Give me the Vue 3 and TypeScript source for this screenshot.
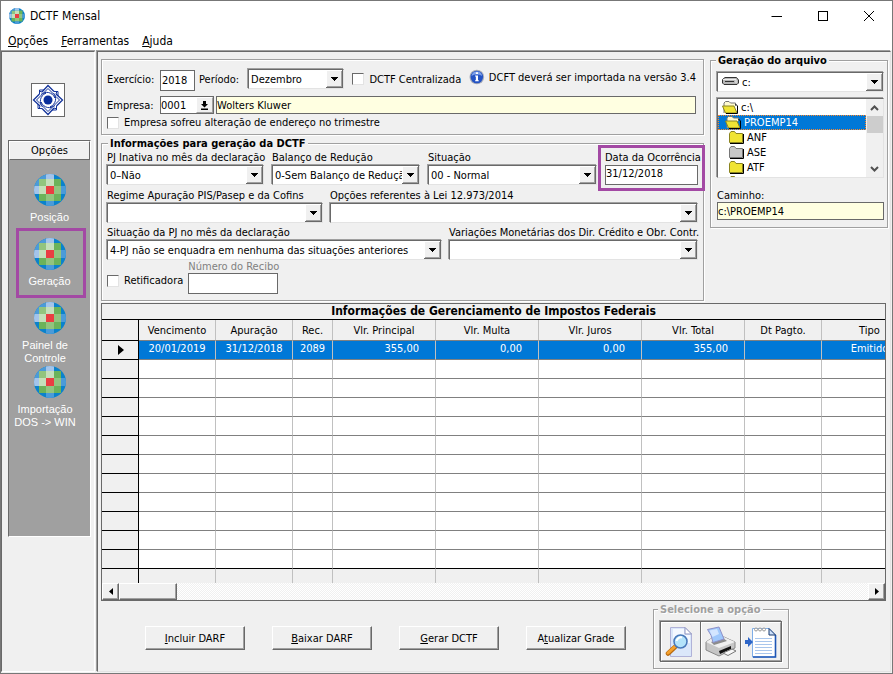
<script setup lang="ts">
import { ref } from 'vue'

interface TaxRow {
  due: string
  period: string
  code: string
  principal: string
  fine: string
  interest: string
  total: string
  paid: string
  kind: string
}

const exercise = ref('2018')
const company = ref('0001')
const companyName = ref('Wolters Kluwer')
const eventDate = ref('31/12/2018')
const receipt = ref('')
const path = ref('c:\\PROEMP14')

const tools = [
  { id: 'posicao', lines: ['Posição'], active: false },
  { id: 'geracao', lines: ['Geração'], active: true },
  { id: 'painel', lines: ['Painel de', 'Controle'], active: false },
  { id: 'importacao', lines: ['Importação', 'DOS -> WIN'], active: false },
]

const folders = [
  { name: 'c:\\', depth: 0, open: true, selected: false, grey: false },
  { name: 'PROEMP14', depth: 1, open: true, selected: true, grey: false },
  { name: 'ANF', depth: 2, open: false, selected: false, grey: false },
  { name: 'ASE', depth: 2, open: false, selected: false, grey: true },
  { name: 'ATF', depth: 2, open: false, selected: false, grey: false },
  { name: '', depth: 2, open: false, selected: false, grey: false },
]

const headers = ['Vencimento', 'Apuração', 'Rec.', 'Vlr. Principal', 'Vlr. Multa', 'Vlr. Juros', 'Vlr. Total', 'Dt Pagto.', 'Tipo']

const row: TaxRow = {
  due: '20/01/2019',
  period: '31/12/2018',
  code: '2089',
  principal: '355,00',
  fine: '0,00',
  interest: '0,00',
  total: '355,00',
  paid: '',
  kind: 'Emitido',
}

const actions = [
  { before: '', key: 'I', after: 'ncluir DARF' },
  { before: '', key: 'B', after: 'aixar DARF' },
  { before: '', key: 'G', after: 'erar DCTF' },
  { before: 'A', key: 't', after: 'ualizar Grade' },
]
</script>

<template>
  <svg class="defs" aria-hidden="true">
    <defs>
      <clipPath id="disc"><circle cx="16" cy="16" r="16" /></clipPath>
      <symbol id="globe" viewBox="0 0 32 32">
        <g clip-path="url(#disc)">
          <rect width="32" height="32" fill="#0a82cc" />
          <rect x="12" width="8" height="5" fill="#a4c4ea" />
          <rect x="5" y="5" width="7" height="7" fill="#92c47e" />
          <rect x="12" y="5" width="8" height="7" fill="#c5dfbb" />
          <rect x="20" y="5" width="7" height="7" fill="#6bb35a" />
          <rect y="12" width="5" height="8" fill="#a4c4ea" />
          <rect x="5" y="12" width="7" height="8" fill="#c5dfbb" />
          <rect x="12" y="12" width="8" height="8" fill="#e93e42" />
          <rect x="20" y="12" width="7" height="8" fill="#92c47e" />
          <rect x="27" y="12" width="5" height="8" fill="#4c9bd8" />
          <rect x="5" y="20" width="7" height="7" fill="#6bb35a" />
          <rect x="12" y="20" width="8" height="7" fill="#92c47e" />
          <rect x="20" y="20" width="7" height="7" fill="#6bb35a" />
          <rect x="12" y="27" width="8" height="5" fill="#4c9bd8" />
          <rect x="5" width="7" height="5" fill="#4c9bd8" />
          <rect y="5" width="5" height="7" fill="#4c9bd8" />
        </g>
      </symbol>
    </defs>
  </svg>

  <div class="window">
    <header class="titlebar">
      <svg class="app-icon" aria-hidden="true"><use href="#globe" /></svg>
      <h1>DCTF Mensal</h1>
      <div class="window-buttons">
        <button type="button" aria-label="Minimizar"><svg viewBox="0 0 12 12"><path d="M0.5 6.5H11" /></svg></button>
        <button type="button" aria-label="Maximizar"><svg viewBox="0 0 12 12"><rect x="1.5" y="1.5" width="9" height="9" /></svg></button>
        <button type="button" aria-label="Fechar"><svg viewBox="0 0 12 12"><path d="M1 1L11 11M11 1L1 11" /></svg></button>
      </div>
    </header>

    <nav class="menubar">
      <a href="#opcoes"><u>O</u>pções</a>
      <a href="#ferramentas"><u>F</u>erramentas</a>
      <a href="#ajuda"><u>A</u>juda</a>
    </nav>

    <div class="body">
      <aside class="sidebar">
        <svg class="brand" viewBox="0 0 32 32" aria-hidden="true">
          <g fill="none" stroke="#14349b">
            <g id="arm">
              <path d="M10 8L16 1.5L22 7.5" stroke-width="1.3" />
              <path d="M12.5 8L16 4.5L23 11.5V14" />
              <path d="M9 10.5C13 7 20 7.5 23 14" />
              <path d="M22 7.5H26V12M10 8L7 7" />
            </g>
            <use href="#arm" transform="rotate(90 16 16)" />
            <use href="#arm" transform="rotate(180 16 16)" />
            <use href="#arm" transform="rotate(270 16 16)" />
          </g>
          <circle cx="16" cy="16" r="4.5" fill="#0a2f9c" />
        </svg>
        <div class="toolbox">
          <h2>Opções</h2>
          <div class="tools">
            <button v-for="t in tools" :key="t.id" type="button" class="tool" :class="{ active: t.active, multi: t.lines.length > 1 }">
              <svg aria-hidden="true"><use href="#globe" /></svg>
              <span v-for="l in t.lines" :key="l">{{ l }}</span>
            </button>
          </div>
        </div>
      </aside>

      <main class="content">
        <div class="top">
          <div class="forms">
            <section class="group company">
              <div class="line exercise-line">
                <label for="exercise" class="lead">Exercício:</label>
                <input id="exercise" v-model="exercise" class="box year" type="text" />
                <label for="period" class="period-label">Período:</label>
                <select id="period" class="period"><option>Dezembro</option></select>
                <label class="check central"><input type="checkbox" />DCTF Centralizada</label>
                <svg class="info" viewBox="0 0 16 16" aria-hidden="true">
                  <circle cx="8" cy="8" r="7.5" fill="#a9adb8" />
                  <circle cx="8" cy="8" r="6.4" fill="#2453c4" />
                  <path d="M2.5 7A5.6 5.6 0 0 1 13.5 7Q8 4 2.5 7Z" fill="#7c9fe8" />
                  <path d="M7 3.2H9.2V5H7ZM6.2 6.4H9.2V11.2H10V12.4H6.2V11.2H7V7.6H6.2Z" fill="#fff" />
                </svg>
                <span class="notice">DCFT deverá ser importada na versão 3.4</span>
              </div>
              <div class="line company-line">
                <label for="company" class="lead">Empresa:</label>
                <div class="lookup">
                  <input id="company" v-model="company" type="text" />
                  <button type="button" aria-label="Buscar empresa">
                    <svg viewBox="0 0 9 9"><path d="M3 0H6V3H8L4.5 6.5L1 3H3ZM1 7.5H8V9H1Z" /></svg>
                  </button>
                </div>
                <input v-model="companyName" class="box yellow company-name" type="text" aria-label="Nome da empresa" />
              </div>
              <label class="check"><input type="checkbox" />Empresa sofreu alteração de endereço no trimestre</label>
            </section>

            <section class="group dctf">
              <h2 class="legend">Informações para geração da DCTF</h2>
              <div class="line status-line">
                <div class="field inactive">
                  <label for="inactive">PJ Inativa no mês da declaração</label>
                  <select id="inactive"><option>0–Não</option></select>
                </div>
                <div class="field balance">
                  <label for="balance">Balanço de Redução</label>
                  <select id="balance"><option>0-Sem Balanço de Redução</option></select>
                </div>
                <div class="field situation">
                  <label for="situation">Situação</label>
                  <select id="situation"><option>00 - Normal</option></select>
                </div>
                <div class="field marked">
                  <label for="event">Data da Ocorrência</label>
                  <input id="event" v-model="eventDate" class="box" type="text" />
                </div>
              </div>
              <div class="line">
                <div class="field regime">
                  <label for="regime">Regime Apuração PIS/Pasep e da Cofins</label>
                  <select id="regime"><option></option></select>
                </div>
                <div class="field grow">
                  <label for="law">Opções referentes à Lei 12.973/2014</label>
                  <select id="law"><option></option></select>
                </div>
              </div>
              <div class="line">
                <div class="field pj">
                  <label for="pj">Situação da PJ no mês da declaração</label>
                  <select id="pj"><option>4-PJ não se enquadra em nenhuma das situações anteriores</option></select>
                </div>
                <div class="field grow">
                  <label for="variation">Variações Monetárias dos Dir. Crédito e Obr. Contr.</label>
                  <select id="variation"><option></option></select>
                </div>
              </div>
              <div class="line receipt-line">
                <label class="check"><input type="checkbox" />Retificadora</label>
                <div class="field receipt">
                  <label for="receipt">Número do Recibo</label>
                  <input id="receipt" v-model="receipt" class="box" type="text" />
                </div>
              </div>
            </section>
          </div>

          <section class="group file">
            <h2 class="legend">Geração do arquivo</h2>
            <div class="drive">
              <select aria-label="Unidade"><option>c:</option></select>
              <svg viewBox="0 0 17 8" aria-hidden="true">
                <path d="M3 0.5H14.5L16.5 3V6L15 7.5H2L0.5 6V2.5Z" fill="#b8b8b8" stroke="#333" />
                <path d="M1 2.5H14V6" fill="none" stroke="#eee" />
                <path d="M3 4.5H12" stroke="#333" />
              </svg>
            </div>
            <div class="explorer">
              <ul>
                <li v-for="f in folders" :key="f.name" :class="[`depth-${f.depth}`, { selected: f.selected, grey: f.grey }]">
                  <svg viewBox="0 0 17 13" aria-hidden="true">
                    <template v-if="f.open">
                      <path d="M2 12V2L3.5 0.5H7L8.5 2H13.5V5" fill="#fffbd0" stroke="#777" />
                      <path d="M0.5 5H12L15 12H3.5Z" fill="#f0e434" stroke="#8a8420" />
                      <path d="M13.5 3L15.5 5V12.5H4" fill="none" stroke="#000" />
                    </template>
                    <template v-else>
                      <path class="tab" d="M1.5 11.5V2.5L3 0.5H6.5L8 2.5H14.5V11.5Z" />
                      <path d="M2 12.5H15.5V3" fill="none" stroke="#000" />
                    </template>
                  </svg>
                  <span>{{ f.name }}</span>
                </li>
              </ul>
              <div class="vscroll">
                <button type="button" aria-label="Acima"><svg viewBox="0 0 9 6"><path d="M1 5L4.5 1.5L8 5" /></svg></button>
                <i></i>
                <button type="button" aria-label="Abaixo"><svg viewBox="0 0 9 6"><path d="M1 1L4.5 4.5L8 1" /></svg></button>
              </div>
            </div>
            <label for="path">Caminho:</label>
            <input id="path" v-model="path" class="box yellow" type="text" />
          </section>
        </div>

        <section class="grid">
          <div class="grid-title">Informações de Gerenciamento de Impostos Federais</div>
          <div class="grid-clip">
            <table>
              <colgroup>
                <col class="w-mark" /><col class="w-date" /><col class="w-date" /><col class="w-code" />
                <col class="w-value" /><col class="w-value" /><col class="w-value" /><col class="w-value" />
                <col class="w-date" /><col class="w-kind" />
              </colgroup>
              <thead>
                <tr><th class="mark"></th><th v-for="h in headers" :key="h">{{ h }}</th></tr>
              </thead>
              <tbody>
                <tr class="current">
                  <td class="mark"><svg viewBox="0 0 6 10" aria-hidden="true"><path d="M0 0L6 5L0 10Z" /></svg></td>
                  <td>{{ row.due }}</td>
                  <td>{{ row.period }}</td>
                  <td>{{ row.code }}</td>
                  <td class="num">{{ row.principal }}</td>
                  <td class="num">{{ row.fine }}</td>
                  <td class="num">{{ row.interest }}</td>
                  <td class="num">{{ row.total }}</td>
                  <td>{{ row.paid }}</td>
                  <td>{{ row.kind }}</td>
                </tr>
                <tr v-for="n in 11" :key="n"><td class="mark"></td><td v-for="c in 9" :key="c"></td></tr>
              </tbody>
              <tfoot>
                <tr><td class="mark"></td><td v-for="c in 9" :key="c"></td></tr>
              </tfoot>
            </table>
          </div>
          <div class="hscroll">
            <button type="button" aria-label="Esquerda"><svg viewBox="0 0 4 7"><path d="M4 0V7L0 3.5Z" /></svg></button>
            <i></i>
            <button type="button" class="end" aria-label="Direita"><svg viewBox="0 0 4 7"><path d="M0 0V7L4 3.5Z" /></svg></button>
          </div>
        </section>

        <footer class="actions">
          <div class="action-buttons">
            <button v-for="a in actions" :key="a.after" type="button" class="push">{{ a.before }}<u>{{ a.key }}</u>{{ a.after }}</button>
          </div>
          <section class="group print">
            <h2 class="legend">Selecione a opção</h2>
            <div class="print-buttons">
              <button type="button" aria-label="Visualizar">
                <svg viewBox="0 0 32 32">
                  <path d="M5.5 1.5H20L26.5 8V30.5H5.5Z" fill="#dbe7fa" stroke="#b0b2d8" />
                  <path d="M8 3H19V9H25V17H8Z" fill="#f4f8ff" />
                  <path d="M20 1.5V8H26.5Z" fill="#fff" stroke="#8f95c0" />
                  <path d="M3 27.5L10 21" stroke="#b86a10" stroke-width="4.5" stroke-linecap="round" />
                  <path d="M3 27L10 20.5" stroke="#f5a12c" stroke-width="3" stroke-linecap="round" />
                  <circle cx="15.5" cy="15.5" r="6.5" fill="#b4e3fa" stroke="#4878ba" stroke-width="1.6" />
                  <path d="M11.5 15A4.5 4.5 0 0 1 17 11.5" fill="none" stroke="#fff" stroke-width="2" />
                </svg>
              </button>
              <button type="button" aria-label="Imprimir">
                <svg viewBox="0 0 32 32">
                  <path d="M1 16L7 12L19 11L30 16V22L14 30L1 24Z" fill="#c6c6c6" stroke="#888" />
                  <path d="M1 16L7 12L19 11L30 16L14 22Z" fill="#efefef" />
                  <path d="M6 16L18 12L22 15L9 19Z" fill="#8c8c8c" />
                  <path d="M2.5 3.5L14 1L19 13L8 16.5Q7 9 2.5 3.5Z" fill="#9fc8fb" stroke="#8d8fc8" />
                  <path d="M4.5 4.5L12 3L14 8L7.5 11Z" fill="#d3e6ff" />
                  <path d="M14 25L26 20V23L15 28Z" fill="#111" />
                  <path d="M18 27L27 23L31 25L23 29.5Z" fill="#f7f7f7" stroke="#777" />
                </svg>
              </button>
              <button type="button" aria-label="Exportar">
                <svg viewBox="0 0 32 32">
                  <path d="M7.5 2.5H24L30.5 9V31H7.5Z" fill="#fff" stroke="#7faee8" />
                  <path d="M30.5 9V31H8" fill="none" stroke="#1d55b5" stroke-width="1.6" />
                  <path d="M24 2.5V9H30.5Z" fill="#cde0fa" stroke="#17386f" />
                  <path d="M10 12.5H27M10 15.5H27M10 18.5H27M10 21.5H27M10 24.5H27M10 27.5H27" stroke="#a9c6ec" />
                  <g fill="#fff" stroke="#999">
                    <circle cx="11" cy="3.5" r="1.5" /><circle cx="15" cy="3.5" r="1.5" /><circle cx="19" cy="3.5" r="1.5" />
                  </g>
                  <path d="M0 14H3V11L8 16L3 21V18H0Z" fill="#2e66c8" />
                </svg>
              </button>
            </div>
          </section>
        </footer>
      </main>
    </div>
  </div>
</template>

<style>
body {
  background: #f0f0f0;
}
</style>

<style scoped>
.defs {
  position: absolute;
  width: 0;
  height: 0;
}
.window,
.window * {
  box-sizing: border-box;
}
.window {
  display: flex;
  flex-direction: column;
  min-height: 100vh;
  border: 1px solid #777;
  background: #f0f0f0;
  color: #000;
  font-family: 'DejaVu Sans Condensed', 'Noto Sans', sans-serif;
  font-size: 11px;
  line-height: 13px;
}
button,
input,
select {
  margin: 0;
  padding: 0;
  border-radius: 0;
  font: inherit;
  color: inherit;
}
h1,
h2 {
  margin: 0;
  font-size: 11px;
}
button svg {
  display: block;
}

/* title and menu */
.titlebar {
  display: flex;
  align-items: center;
  height: 29px;
  padding-left: 8px;
  background: #fff;
}
.app-icon {
  width: 16px;
  height: 16px;
}
.titlebar h1 {
  margin-left: 5px;
  font-size: 12px;
  font-weight: 400;
  line-height: 14px;
}
.window-buttons {
  display: flex;
  margin-left: auto;
}
.window-buttons button {
  display: grid;
  place-items: center;
  width: 46px;
  height: 28px;
  border: 0;
  background: none;
}
.window-buttons svg {
  width: 12px;
  height: 12px;
  fill: none;
  stroke: #000;
}
.menubar {
  display: flex;
  gap: 13px;
  height: 20px;
  padding: 5px 7px 0;
  background: #fff;
  font-size: 12px;
}
.menubar a {
  color: #000;
  text-decoration: none;
}

/* panes */
.body {
  display: flex;
  flex: 1;
  padding: 1px 1px 1px 0;
}
.sidebar {
  flex: none;
  width: 94px;
  padding: 31px 3px 0 6px;
  border: 1px solid;
  border-color: #696969 #fff #fff #696969;
  box-shadow: 0 -1px #a0a0a0;
}
.brand {
  display: block;
  width: 34px;
  height: 34px;
  margin-left: 23px;
  border: 1px solid #696969;
  background: #fff;
}
.toolbox {
  height: 397px;
  margin-top: 23px;
  border: 1px solid;
  border-color: #696969 #fff #fff #696969;
  background: #a0a0a0;
}
.toolbox h2 {
  height: 19px;
  border: 1px solid;
  border-color: #fff #696969 #696969 #fff;
  background: #f0f0f0;
  font-weight: 400;
  line-height: 18px;
  text-align: center;
}
.tools {
  padding: 14px 6px 0;
}
.tool {
  position: relative;
  display: flex;
  flex-direction: column;
  align-items: center;
  width: 100%;
  height: 64px;
  border: 0;
  background: none;
  color: #fff;
  font-family: 'Liberation Sans', sans-serif;
  line-height: 13px;
  white-space: nowrap;
}
.tool svg {
  flex: none;
  width: 32px;
  height: 32px;
  margin-bottom: 5px;
}
.tool.multi span {
  margin-right: 9px;
}
.tool.active::after {
  content: '';
  position: absolute;
  inset: -10px -2px 4px 1px;
  border: 3px solid #a349a4;
}
.content {
  display: flex;
  flex: 1;
  flex-direction: column;
  min-width: 0;
  margin-left: 2px;
  padding: 7px 2px 1px 3px;
  border: 1px solid;
  border-color: #696969 #e3e3e3 #e3e3e3 #696969;
  box-shadow: -1px -1px #a0a0a0;
}

/* groups and fields */
.top {
  display: flex;
  align-items: flex-start;
  gap: 6px;
}
.forms {
  flex: 1;
  min-width: 0;
}
.group {
  border: 1px solid #a0a0a0;
  box-shadow: 1px 1px #fff, inset 1px 1px #fff;
}
.legend {
  width: max-content;
  padding: 0 2px;
  background: #f0f0f0;
  line-height: 14px;
  white-space: nowrap;
}
.line {
  display: flex;
}
.box {
  border: 1px solid #696969;
  background: #fff;
}
.yellow {
  background: #ffffe1;
}
select {
  appearance: none;
  display: block;
  width: 100%;
  height: 20px;
  padding: 0 17px 0 2px;
  border: 1px solid;
  border-color: #696969 #e3e3e3 #e3e3e3 #696969;
  box-shadow: -1px -1px #a0a0a0;
  background: #fff url("data:image/svg+xml,%3Csvg xmlns='http://www.w3.org/2000/svg' width='17' height='18'%3E%3Cpath fill='%23696969' d='M0 0h17v18H0z'/%3E%3Cpath fill='%23fff' d='M0 0h16v17H0z'/%3E%3Cpath fill='%23a0a0a0' d='M1 1h15v16H1z'/%3E%3Cpath fill='%23f0f0f0' d='M1 1h14v15H1z'/%3E%3Cpath d='M5 7h7v1h-1v1h-1v1h-1v1H8v-1H7V9H6V8H5z'/%3E%3C/svg%3E") no-repeat right center;
  white-space: nowrap;
}
.check {
  display: flex;
  align-items: center;
  gap: 5px;
  white-space: nowrap;
}
.check input {
  appearance: none;
  width: 12px;
  height: 12px;
  border: 1px solid;
  border-color: #696969 #e3e3e3 #e3e3e3 #696969;
  background: #fff;
}
.company {
  height: 76px;
  padding: 8px 7px 0 5px;
}
.exercise-line {
  align-items: center;
  height: 22px;
}
.lead {
  flex: none;
  width: 53px;
}
.year {
  width: 35px;
  height: 21px;
  margin-top: 3px;
  padding: 0 1px;
}
.period-label {
  width: 44px;
  margin-left: 4px;
}
.period {
  width: 98px;
  margin-left: 6px;
}
.central {
  margin-left: 8px;
}
.info {
  width: 16px;
  height: 16px;
  margin: 0 4px 4px 8px;
}
.notice {
  margin-bottom: 4px;
  white-space: nowrap;
}
.company-line {
  align-items: center;
  margin: 6px 0 2px;
}
.lookup {
  display: flex;
  width: 54px;
  height: 18px;
  border: 1px solid #696969;
  background: #fff;
}
.lookup input {
  flex: 1;
  min-width: 0;
  border: 0;
}
.lookup button {
  display: grid;
  place-items: center;
  width: 17px;
  border: 1px solid;
  border-color: #fff #a0a0a0 #a0a0a0 #fff;
  background: #f0f0f0;
}
.lookup svg {
  width: 9px;
  height: 9px;
}
.company-name {
  flex: 1;
  min-width: 0;
  height: 18px;
  margin-left: 2px;
}
.dctf {
  height: 158px;
  margin-top: 8px;
  padding: 0 5px;
}
.dctf .legend {
  margin: -7px 0 0 1px;
}
.dctf .line {
  gap: 7px;
  margin-bottom: 2px;
}
.field > label {
  display: block;
  height: 14px;
  white-space: nowrap;
}
.dctf .status-line {
  gap: 8px;
  margin-bottom: 3px;
}
.grow {
  flex: 1;
  min-width: 0;
}
.dctf .field {
  padding-bottom: 1px;
}
.inactive {
  width: 157px;
}
.balance {
  width: 148px;
}
.situation {
  flex: 1;
}
.marked {
  position: relative;
  width: 93px;
}
.marked::after {
  content: '';
  position: absolute;
  inset: -6px -7px -5px -7px;
  border: 3px solid #a349a4;
  pointer-events: none;
}
.marked .box {
  display: block;
  width: 93px;
  height: 20px;
  padding-bottom: 4px;
}
.regime {
  width: 216px;
}
.pj {
  width: 335px;
}
.dctf .receipt-line {
  align-items: center;
  gap: 5px;
  margin-top: -2px;
}
.receipt-line .check {
  margin-top: 5px;
}
.receipt label {
  height: 12px;
  color: #808080;
  line-height: 12px;
}
.receipt .box {
  display: block;
  width: 90px;
  height: 21px;
}
.file {
  flex: none;
  width: 178px;
  height: 168px;
  margin-top: 1px;
  padding: 0 3px 0 6px;
}
.file .legend {
  margin: -7px 0 4px -1px;
}
.drive {
  position: relative;
}
.drive select {
  padding-left: 24px;
}
.drive svg {
  position: absolute;
  top: 5px;
  left: 5px;
  width: 17px;
  height: 8px;
}
.explorer {
  display: flex;
  height: 80px;
  margin: 6px 0 11px;
  border: 1px solid;
  border-color: #696969 #e3e3e3 #e3e3e3 #696969;
  box-shadow: -1px -1px #a0a0a0;
  background: #fff;
}
.explorer ul {
  flex: 1;
  margin: 0;
  padding: 1px 0 0;
  overflow: hidden;
  list-style: none;
}
.explorer li {
  display: flex;
  align-items: center;
  gap: 2px;
  height: 15px;
  padding-left: 4px;
}
.explorer .depth-1 {
  padding-left: 7px;
}
.explorer .depth-2 {
  padding-left: 10px;
}
.explorer .selected {
  outline: 1px dotted #ff8728;
  outline-offset: -1px;
  background: #0078d7;
  color: #fff;
}
.explorer li svg {
  width: 17px;
  height: 13px;
}
.tab {
  fill: #f0e434;
  stroke: #8a8420;
}
.grey .tab {
  fill: #c8c8c8;
  stroke: #777;
}
.vscroll {
  display: flex;
  flex-direction: column;
  width: 17px;
  background: #f0f0f0;
}
.vscroll button {
  display: grid;
  place-items: center;
  height: 17px;
  border: 0;
  background: none;
}
.vscroll button:last-child {
  margin-top: auto;
}
.vscroll svg {
  width: 9px;
  height: 6px;
  fill: none;
  stroke: #505050;
  stroke-width: 2;
}
.vscroll i {
  height: 17px;
  margin-left: 1px;
  background: #cdcdcd;
}
.file > label {
  display: block;
}
.file > .box {
  display: block;
  width: 100%;
  height: 18px;
}

/* tax grid */
.grid {
  margin: 2px 2px 0 0;
  border: 1px solid #696969;
}
.grid-title {
  height: 16px;
  border-bottom: 1px solid #000;
  font-size: 12px;
  font-weight: 700;
  line-height: 15px;
  text-align: center;
}
.grid-clip {
  overflow: hidden;
}
table {
  width: 816px;
  table-layout: fixed;
  border-collapse: separate;
  border-spacing: 0;
}
.w-mark { width: 37px; }
.w-date { width: 77px; }
.w-code { width: 40px; }
.w-value { width: 103px; }
.w-kind { width: 96px; }
th,
td {
  height: 19px;
  padding: 0;
  border-right: 1px solid #c0c0c0;
  border-bottom: 1px solid #808080;
  background: #fff;
  text-align: center;
}
th {
  height: 21px;
  background: #f0f0f0;
  font-weight: 400;
}
.mark {
  border-right-color: #000;
  border-bottom-color: #000;
  background: #f0f0f0;
}
.mark svg {
  display: block;
  width: 6px;
  height: 10px;
  margin-left: 16px;
}
.current td:not(.mark) {
  padding-bottom: 3px;
  background: #0078d7;
  color: #fff;
}
td.num {
  padding-right: 16px;
  text-align: right;
}
tbody tr:last-child td {
  border-bottom-color: #000;
}
tfoot td {
  height: 14px;
  border-bottom: 0;
  background: #f0f0f0;
}
.hscroll {
  display: flex;
  height: 17px;
  background: repeating-conic-gradient(#fff 0 25%, #f0f0f0 0 50%) 0 0 / 2px 2px;
}
.hscroll button,
.hscroll i {
  display: grid;
  place-items: center;
  width: 17px;
  height: 17px;
  border: 1px solid;
  border-color: #fff #696969 #696969 #fff;
  box-shadow: inset -1px -1px #a0a0a0;
  background: #f0f0f0;
}
.hscroll i {
  width: 58px;
}
.hscroll svg {
  width: 4px;
  height: 7px;
}
.hscroll .end {
  margin-left: auto;
}

/* actions */
.actions {
  display: flex;
  align-items: flex-start;
  padding-left: 44px;
}
.action-buttons {
  display: flex;
  gap: 27px;
  margin-top: 25px;
}
.push {
  width: 100px;
  height: 24px;
  border: 1px solid;
  border-color: #fff #696969 #696969 #fff;
  box-shadow: inset -1px -1px #a0a0a0;
  background: #f0f0f0;
}
.print {
  height: 60px;
  margin: 8px 0 0 27px;
  padding: 0 6px;
}
.print .legend {
  margin: -7px 0 4px -2px;
  color: #a0a0a0;
  text-shadow: 1px 1px #fff;
}
.print-buttons {
  display: flex;
  width: 122px;
  border: 1px solid #696969;
  box-shadow: -1px -1px #a0a0a0, 1px 1px #fff;
}
.print-buttons button {
  display: grid;
  flex: 1;
  place-items: center;
  height: 39px;
  border: 1px solid;
  border-color: #fff #a0a0a0 #a0a0a0 #fff;
  background: #f0f0f0;
}
.print-buttons button + button {
  box-shadow: -1px 0 #696969;
}
.print-buttons svg {
  width: 32px;
  height: 32px;
}
</style>
